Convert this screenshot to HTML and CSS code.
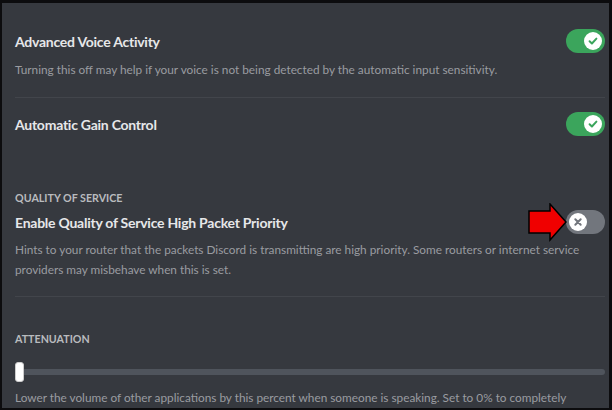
FILE: index.html
```html
<!DOCTYPE html>
<html>
<head>
<meta charset="utf-8">
<link rel="stylesheet" href="styles.css">
</head>
<body>
<div class="frame">
  <div class="content">
    <div class="item first">
      <div class="row">
        <div class="title">Advanced Voice Activity</div>
        <div class="toggle on"><span class="knob"><svg viewBox="0 0 20 20" width="18" height="18"><path d="M6.2 10.3 L8.8 12.8 L13.8 7.4" fill="none" stroke="#3ba55c" stroke-width="2.2" stroke-linecap="round" stroke-linejoin="round"/></svg></span></div>
      </div>
      <div class="desc">Turning this off may help if your voice is not being detected by the automatic input sensitivity.</div>
    </div>
    <div class="divider"></div>
    <div class="item">
      <div class="row">
        <div class="title">Automatic Gain Control</div>
        <div class="toggle on"><span class="knob"><svg viewBox="0 0 20 20" width="18" height="18"><path d="M6.2 10.3 L8.8 12.8 L13.8 7.4" fill="none" stroke="#3ba55c" stroke-width="2.2" stroke-linecap="round" stroke-linejoin="round"/></svg></span></div>
      </div>
    </div>
    <div class="section">
      <div class="label">Quality of Service</div>
      <div class="row">
        <div class="title">Enable Quality of Service High Packet Priority</div>
        <div class="toggle off">
          <svg class="arrow" viewBox="0 0 40 40" width="40" height="40"><polygon points="1,8 22,8 22,1 38,19 22,37 22,30 1,30" fill="#f00000" stroke="#000" stroke-width="1.5" stroke-linejoin="miter"/></svg>
          <span class="knob"><svg viewBox="0 0 20 20" width="18" height="18"><path d="M7 7 L13 13 M13 7 L7 13" fill="none" stroke="#72767d" stroke-width="2.2" stroke-linecap="round"/></svg></span>
        </div>
      </div>
      <div class="desc two">Hints to your router that the packets Discord is transmitting are high priority. Some routers or internet service providers may misbehave when this is set.</div>
    </div>
    <div class="divider second"></div>
    <div class="section atten">
      <div class="label">Attenuation</div>
      <div class="slider"><span class="grabber"></span></div>
      <div class="desc">Lower the volume of other applications by this percent when someone is speaking. Set to 0% to completely</div>
    </div>
  </div>
</div>
</body>
</html>
```
FILE: styles.css
```css
html, body {
  margin: 0;
  padding: 0;
  background: #0c0c0e;
}
.frame {
  width: 612px;
  height: 410px;
  box-sizing: border-box;
  border-top: 3px solid #0c0c0e;
  border-left: 2px solid #0c0c0e;
  border-right: 3px solid #0c0c0e;
  border-bottom: 2px solid #0c0c0e;
  background: #36393f;
  overflow: hidden;
}
.content {
  padding: 0 4px 0 13px;
  font-family: Lato, "Noto Sans", sans-serif;
}
.item.first {
  padding-top: 26px;
}
.row {
  display: flex;
  align-items: center;
  justify-content: space-between;
  height: 24px;
}
.title {
  color: #e6e7e9;
  font-size: 14px;
  font-weight: 700;
  letter-spacing: -0.25px;
}
.desc {
  color: #9a9ca1;
  font-size: 11.8px;
  line-height: 20px;
  margin-top: 7px;
  max-width: 572px;
}
.divider {
  height: 1px;
  background: #42454b;
  margin: 17px 0 14px;
}
.toggle {
  position: relative;
  width: 39px;
  height: 24px;
  border-radius: 12px;
  box-sizing: border-box;
  padding: 3px;
  display: flex;
  align-items: center;
}
.toggle.on {
  background: #3ba55c;
  justify-content: flex-end;
}
.toggle.off {
  background: #72767d;
  justify-content: flex-start;
}
.knob {
  width: 18px;
  height: 18px;
  border-radius: 50%;
  background: #fff;
  display: flex;
}
.arrow {
  position: absolute;
  left: -38px;
  top: -7px;
}
.section {
  margin-top: 54px;
}
.label {
  color: #b9bbbe;
  font-size: 10.7px;
  font-weight: 700;
  text-transform: uppercase;
  line-height: 16px;
  margin-bottom: 4px;
}
.desc.two {
  margin-top: 6px;
}
.divider.second {
  margin: 16px 0 0;
}
.section.atten {
  margin-top: 34px;
}
.slider {
  position: relative;
  height: 6px;
  border-radius: 3px;
  background: #4f545c;
  margin-top: 22px;
}
.grabber {
  position: absolute;
  left: 0;
  top: -7px;
  width: 9px;
  height: 20px;
  border-radius: 3px;
  background: #fff;
  border: 1px solid #ccc;
  box-sizing: border-box;
}
.atten .desc {
  margin-top: 13px;
  white-space: nowrap;
  max-width: none;
}
```
